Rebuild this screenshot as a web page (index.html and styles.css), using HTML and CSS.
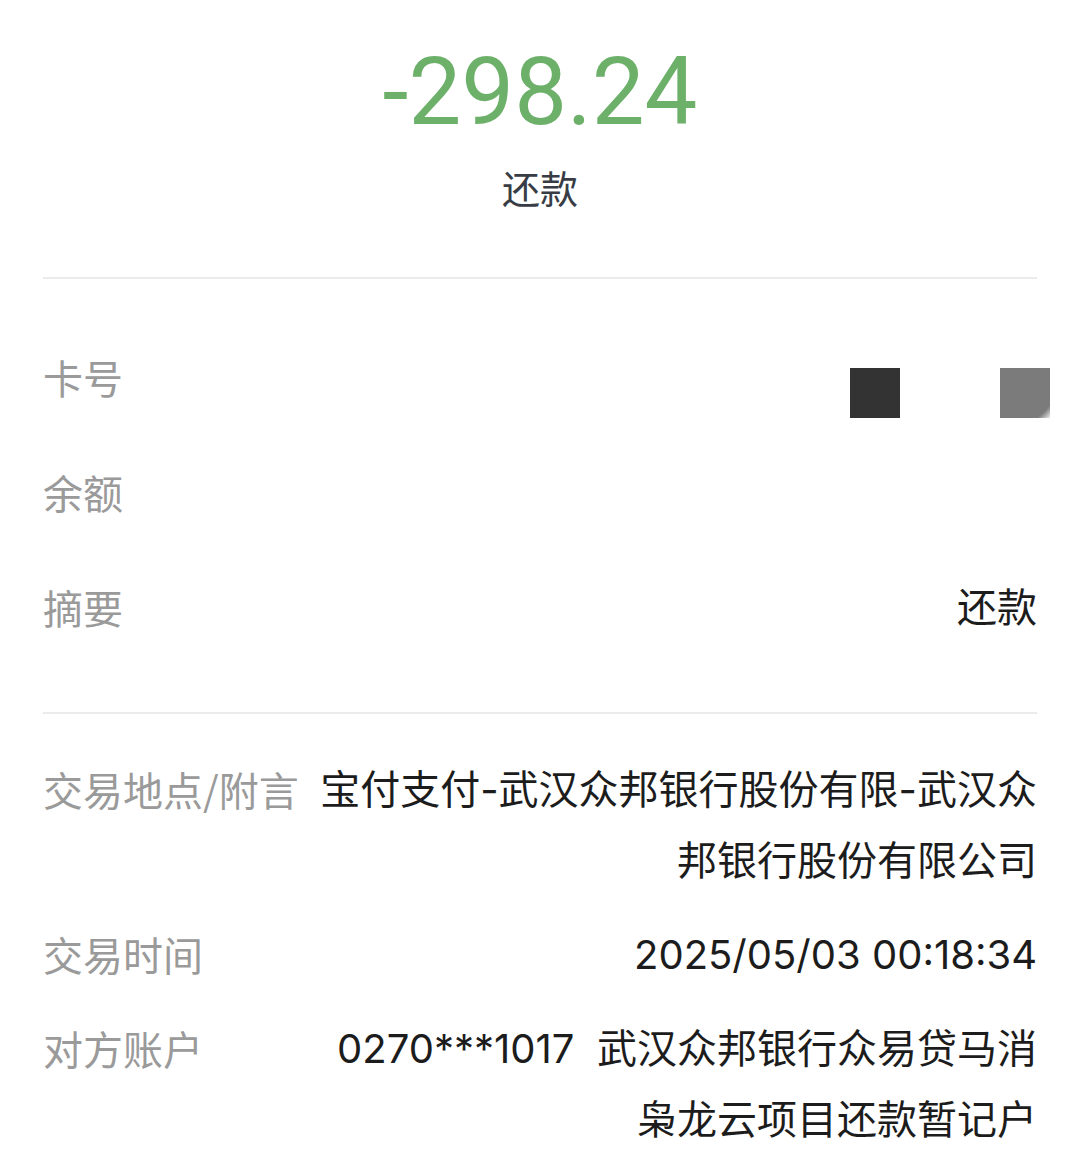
FILE: index.html
```html
<!DOCTYPE html>
<html lang="zh-CN">
<head>
<meta charset="utf-8">
<title>交易详情</title>
<link rel="stylesheet" href="styles.css">
</head>
<body>
<div class="page">
  <header class="summary">
    <div class="amount">-298.24</div>
    <div class="type">还款</div>
  </header>
  <div class="divider"></div>
  <section class="group group-basic">
    <div class="row">
      <div class="label">卡号</div>
      <div class="value masks">
        <span class="mask mask-dark"></span>
        <span class="mask mask-gray"></span>
      </div>
    </div>
    <div class="row">
      <div class="label">余额</div>
      <div class="value"></div>
    </div>
    <div class="row">
      <div class="label">摘要</div>
      <div class="value">还款</div>
    </div>
  </section>
  <div class="divider"></div>
  <section class="group group-detail">
    <div class="row">
      <div class="label">交易地点/附言</div>
      <div class="value">宝付支付-武汉众邦银行股份有限-武汉众邦银行股份有限公司</div>
    </div>
    <div class="row">
      <div class="label">交易时间</div>
      <div class="value">2025/05/03 00:18:34</div>
    </div>
    <div class="row">
      <div class="label">对方账户</div>
      <div class="value">0270***1017&nbsp;&nbsp;武汉众邦银行众易贷马消枭龙云项目还款暂记户</div>
    </div>
  </section>
</div>
</body>
</html>
```

FILE: styles.css
```css
html, body {
  margin: 0;
  padding: 0;
  background: #ffffff;
}

body {
  font-family: "Noto Sans CJK SC", "Noto Sans", sans-serif;
  color: #1c1c1c;
}

.page {
  width: 1080px;
  height: 1168px;
  overflow: hidden;
}

.summary {
  display: flex;
  flex-direction: column;
  align-items: center;
  padding-top: 45px;
  height: 277px;
  box-sizing: border-box;
}

.amount {
  font-family: Roboto, "Noto Sans", sans-serif;
  font-size: 94px;
  line-height: 94px;
  color: #6cb06a;
}

.type {
  margin-top: 23px;
  font-size: 38px;
  line-height: 50px;
  color: #383d45;
}

.divider {
  margin: 0 43px;
  height: 2px;
  background: #ebebeb;
}

.group {
  padding: 0 43px;
  display: flex;
  flex-direction: column;
}

.group-basic {
  padding-top: 41px;
  padding-bottom: 47px;
}

.group-basic .row {
  height: 115px;
  align-items: center;
}

.group-detail {
  padding-top: 40px;
  gap: 23px;
}

.row {
  display: flex;
  font-size: 40px;
  line-height: 71px;
}

.label {
  flex: 0 0 255px;
  color: #9a9a9a;
  white-space: nowrap;
}

.value {
  flex: 1 1 auto;
  margin-left: 18px;
  text-align: right;
  color: #1c1c1c;
  font-family: Inter, "Noto Sans CJK SC", sans-serif;
}

.masks {
  display: flex;
  justify-content: flex-end;
  gap: 100px;
  margin-right: -13px;
  margin-top: 30px;
}

.mask {
  width: 50px;
  height: 50px;
  display: block;
}

.mask-dark {
  background: #333333;
}

.mask-gray {
  background: radial-gradient(circle at 0 0, #7b7b7b 62px, rgba(123,123,123,0) 72px);
}
```
